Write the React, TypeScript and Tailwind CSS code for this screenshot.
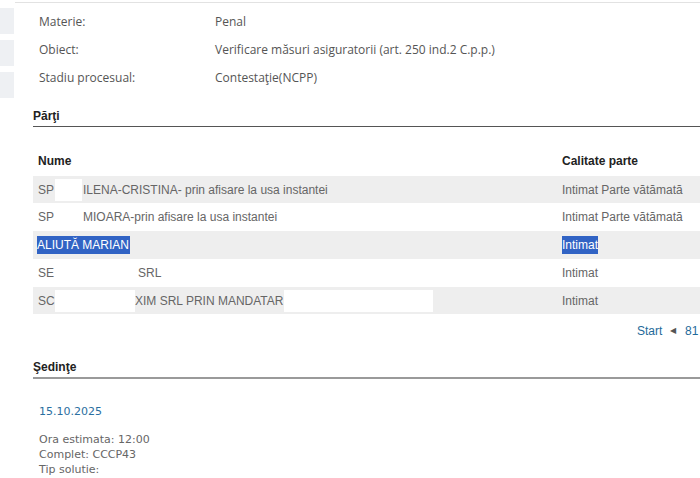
import React from "react";

const rowText = "text-[12px] text-[#666]";

export default function App() {
  return (
    <div className="relative w-[700px] h-[478px] overflow-hidden bg-white" style={{ fontFamily: '"Liberation Sans", Arial, sans-serif' }}>
      {/* top line */}
      <div className="absolute left-[15px] right-0 top-[2px] h-px bg-[#e2e2e2]" />
      {/* left strip */}
      <div className="absolute left-0 top-[8px] flex flex-col gap-[6px]">
        <div className="w-[14px] h-[26px] bg-[#eef0f3]" />
        <div className="w-[14px] h-[26px] bg-[#eef0f3]" />
        <div className="w-[14px] h-[26px] bg-[#eef0f3]" />
      </div>

      <div className="pl-[33px] pt-[8px]">
        {/* details */}
        <div className="flex flex-col pl-[6px] text-[12px] text-[#555]" style={{ fontFamily: '"Open Sans", sans-serif' }}>
          <div className="flex h-[28px] items-center"><span className="w-[176px]">Materie:</span><span>Penal</span></div>
          <div className="flex h-[28px] items-center"><span className="w-[176px]">Obiect:</span><span>Verificare măsuri asiguratorii (art. 250 ind.2 C.p.p.)</span></div>
          <div className="flex h-[28px] items-center"><span className="w-[176px]">Stadiu procesual:</span><span>Contestaţie(NCPP)</span></div>
        </div>

        {/* Parti */}
        <div className="mt-[17px] border-b border-[#555] pb-[3px] text-[12px] leading-[14px] font-bold text-[#222]">Părţi</div>

        <div className="mt-[25px] flex h-[18px] items-center text-[12px] font-bold text-[#222]">
          <span className="w-[529px] pl-[5px]">Nume</span>
          <span>Calitate parte</span>
        </div>

        <div className="mt-[6px] flex flex-col">
          <div className={`flex h-[27px] items-center bg-[#eeeeee] ${rowText}`}>
            <div className="w-[529px] flex items-center h-full">
              <span className="pl-[5px] w-[22px]">SP</span>
              <span className="w-[27px] h-[22px] bg-white" />
              <span className="pl-[1px]">ILENA-CRISTINA- prin afisare la usa instantei</span>
            </div>
            <span>Intimat Parte vătămată</span>
          </div>
          <div className={`flex h-[28px] items-center bg-white ${rowText}`}>
            <div className="w-[529px] flex items-center h-full">
              <span className="pl-[5px] w-[50px]">SP</span>
              <span>MIOARA-prin afisare la usa instantei</span>
            </div>
            <span>Intimat Parte vătămată</span>
          </div>
          <div className={`flex h-[28px] items-center bg-[#eeeeee] ${rowText}`}>
            <div className="w-[529px] flex items-center h-full pl-[4px]">
              <span className="bg-[#3163c4] text-white pr-[1px]">ALIUTĂ MARIAN</span>
            </div>
            <span className="bg-[#3163c4] text-white">Intimat</span>
          </div>
          <div className={`flex h-[28px] items-center bg-white ${rowText}`}>
            <div className="w-[529px] flex items-center h-full">
              <span className="pl-[5px] w-[105px]">SE</span>
              <span>SRL</span>
            </div>
            <span>Intimat</span>
          </div>
          <div className={`flex h-[27px] items-center bg-[#eeeeee] ${rowText}`}>
            <div className="w-[529px] flex items-center h-full">
              <span className="pl-[5px] w-[22px]">SC</span>
              <span className="w-[80px] h-[22px] bg-white" />
              <span>XIM SRL PRIN MANDATAR</span>
              <span className="ml-[1px] w-[149px] h-[22px] bg-white" />
            </div>
            <span>Intimat</span>
          </div>
        </div>

        <div className="relative mt-[9px] h-[16px] text-[12px] leading-[16px] text-[#1f6a9a]">
          <span className="absolute left-[604px] top-0">Start</span>
          <span className="absolute left-[637px] top-0 text-[8px] text-[#555]">◀</span>
          <span className="absolute left-[652px] top-0">81</span>
        </div>

        {/* Sedinte */}
        <div className="mt-[21px] border-b-2 border-[#9a9a9a] pb-[3px] text-[12px] leading-[14px] font-bold text-[#222]">Şedinţe</div>

        <div className="mt-[26px] pl-[6px] text-[11px] leading-[14px] text-[#2a6fa0]" style={{ fontFamily: '"DejaVu Sans", sans-serif' }}>15.10.2025</div>
        <div className="mt-[13px] pl-[6px] text-[11px] leading-[15px] text-[#666]" style={{ fontFamily: '"DejaVu Sans", sans-serif' }}>
          <div>Ora estimata: 12:00</div>
          <div>Complet: CCCP43</div>
          <div>Tip solutie:</div>
        </div>
      </div>
    </div>
  );
}
